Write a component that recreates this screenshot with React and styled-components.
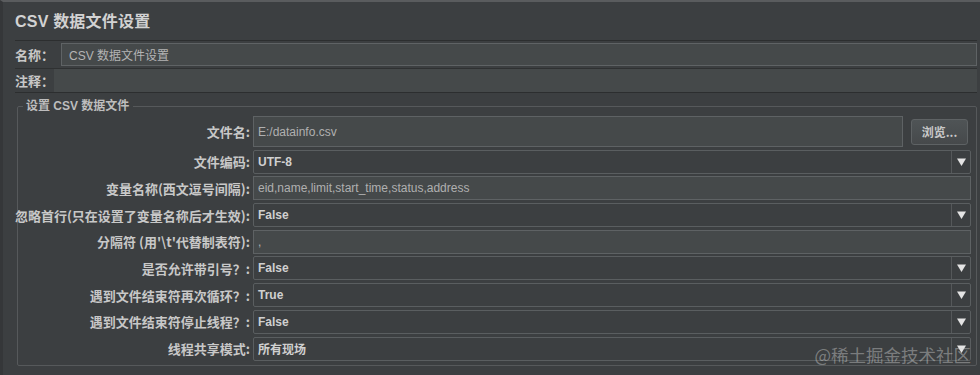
import React from "react";
import styled, { createGlobalStyle } from "styled-components";

const Global = createGlobalStyle`
  html, body { margin: 0; padding: 0; background: #3c3f41; }
  body { font-family: "Liberation Sans", "Noto Sans CJK SC", sans-serif; color: #bbbbbb; }
`;

const Page = styled.div`
  position: relative;
  width: 980px;
  height: 375px;
  box-sizing: border-box;
  background: #3c3f41;
  border-top: 2px solid #5a5c5e;
  border-left: 3px solid #353739;
  padding: 0 3px 0 12px;
  overflow: hidden;
`;

const Title = styled.h1`
  margin: 0;
  height: 38px;
  line-height: 40px;
  font-size: 16px;
  font-weight: 700;
  color: #d2d2d2;
  font-family: "Liberation Sans", "Noto Sans CJK SC", sans-serif;
  letter-spacing: 0.2px;
`;

const NamePanel = styled.div`
  border-top: 1px solid #2c2e2f;
  display: flex;
  flex-direction: column;
`;

const NameRow = styled.div`
  display: flex;
  align-items: center;
  height: ${(p) => p.$h}px;
  border-bottom: 1px solid ${(p) => p.$line};
`;

const NameLabel = styled.span`
  width: ${(p) => p.$w}px;
  flex: none;
  font-size: 13px;
  font-weight: 700;
  color: #c8c8c8;
  font-family: "Noto Sans CJK SC", sans-serif;
`;

const PanelInput = styled.div`
  flex: 1;
  align-self: stretch;
  margin: ${(p) => p.$m};
  background: #45494a;
  border: 1px solid ${(p) => p.$border};
  display: flex;
  align-items: center;
  padding-left: 7px;
  font-size: 12px;
  color: #b4b4b4;
  font-family: "Liberation Sans", "Noto Sans CJK SC", sans-serif;
`;

const Fieldset = styled.fieldset`
  margin: 6px 0 0 2px;
  padding: 3px 5px 4px 1px;
  border: 1px solid #56595b;
  border-radius: 2px;
  min-width: 0;
`;

const Legend = styled.legend`
  margin-left: 4px;
  padding: 0 4px 0 3px;
  font-size: 12px;
  font-weight: 700;
  color: #bdbdbd;
  font-family: "Liberation Sans", "Noto Sans CJK SC", sans-serif;
  line-height: 14px;
`;

const Grid = styled.div`
  display: grid;
  grid-template-columns: 231px 1fr;
  column-gap: 3px;
  row-gap: 2.7px;
`;

const Label = styled.div`
  display: flex;
  align-items: center;
  justify-content: flex-end;
  font-size: 13px;
  font-weight: 700;
  color: #c8c8c8;
  font-family: "Noto Sans CJK SC", sans-serif;
  white-space: nowrap;
  height: ${(p) => (p.$tall ? 31 : 24)}px;
`;

const FileRow = styled.div`
  display: flex;
  align-items: center;
  gap: 8px;
  height: 31px;
`;

const TextField = styled.div`
  flex: 1;
  align-self: stretch;
  height: ${(p) => (p.$tall ? "auto" : "24px")};
  box-sizing: border-box;
  background: #45494a;
  border: 1px solid #5e6264;
  display: flex;
  align-items: center;
  padding-left: 4px;
  font-size: 12px;
  color: #b0b0b0;
  font-family: "Liberation Sans", "Noto Sans CJK SC", sans-serif;
`;

const Button = styled.div`
  width: 57px;
  height: 26px;
  margin-right: 3px;
  box-sizing: border-box;
  border: 1px solid #5e6264;
  border-radius: 3px;
  background: linear-gradient(#4f5456, #46494b);
  display: flex;
  align-items: center;
  justify-content: center;
  font-size: 12px;
  font-weight: 700;
  color: #c8c8c8;
  font-family: "Noto Sans CJK SC", sans-serif;
`;

const Combo = styled.div`
  display: flex;
  height: 24px;
  box-sizing: border-box;
  border: 1px solid #5a5e60;
  border-radius: 2px;
  background: #3c3f41;
`;

const ComboValue = styled.div`
  flex: 1;
  display: flex;
  align-items: center;
  padding-left: 4px;
  font-size: 12px;
  font-weight: 700;
  color: #d0d0d0;
  font-family: "Liberation Sans", "Noto Sans CJK SC", sans-serif;
`;

const Arrow = styled.div`
  width: 18px;
  border-left: 1px solid #55585a;
  display: flex;
  align-items: center;
  justify-content: center;
`;

const Watermark = styled.div`
  position: absolute;
  right: 9px;
  bottom: 8px;
  font-size: 17.5px;
  color: rgba(215, 215, 215, 0.42);
  font-family: "Noto Sans CJK SC", sans-serif;
`;

const Tri = () => (
  <svg width="9" height="8" viewBox="0 0 9 8">
    <path d="M0 0.5 H9 L4.5 8 Z" fill="#e4e4e4" />
  </svg>
);

const ComboBox = ({ value }) => (
  <Combo>
    <ComboValue>{value}</ComboValue>
    <Arrow>
      <Tri />
    </Arrow>
  </Combo>
);

const rows = [
  { label: "文件编码:", type: "combo", value: "UTF-8" },
  { label: "变量名称(西文逗号间隔):", type: "text", value: "eid,name,limit,start_time,status,address" },
  { label: "忽略首行(只在设置了变量名称后才生效):", type: "combo", value: "False" },
  { label: "分隔符 (用'\\t'代替制表符):", type: "text", value: "," },
  { label: "是否允许带引号？:", type: "combo", value: "False" },
  { label: "遇到文件结束符再次循环？:", type: "combo", value: "True" },
  { label: "遇到文件结束符停止线程？:", type: "combo", value: "False" },
  { label: "线程共享模式:", type: "combo", value: "所有现场" },
];

export default function App() {
  return (
    <>
      <Global />
      <Page>
        <Title>CSV 数据文件设置</Title>
        <NamePanel>
          <NameRow $h={27} $line="#2f3132">
            <NameLabel $w={46}>名称：</NameLabel>
            <PanelInput $m="2px 0 2px 0" $border="#5f6365">CSV 数据文件设置</PanelInput>
          </NameRow>
          <NameRow $h={23} $line="#2c2e2f">
            <NameLabel $w={39}>注释：</NameLabel>
            <PanelInput $m="0" $border="#45494a" />
          </NameRow>
        </NamePanel>
        <Fieldset>
          <Legend>设置 CSV 数据文件</Legend>
          <Grid>
            <Label $tall>文件名:</Label>
            <FileRow>
              <TextField $tall>E:/datainfo.csv</TextField>
              <Button>浏览...</Button>
            </FileRow>
            {rows.map((r) => (
              <React.Fragment key={r.label}>
                <Label>{r.label}</Label>
                {r.type === "combo" ? <ComboBox value={r.value} /> : <TextField>{r.value}</TextField>}
              </React.Fragment>
            ))}
          </Grid>
        </Fieldset>
        <Watermark>@稀土掘金技术社区</Watermark>
      </Page>
    </>
  );
}
